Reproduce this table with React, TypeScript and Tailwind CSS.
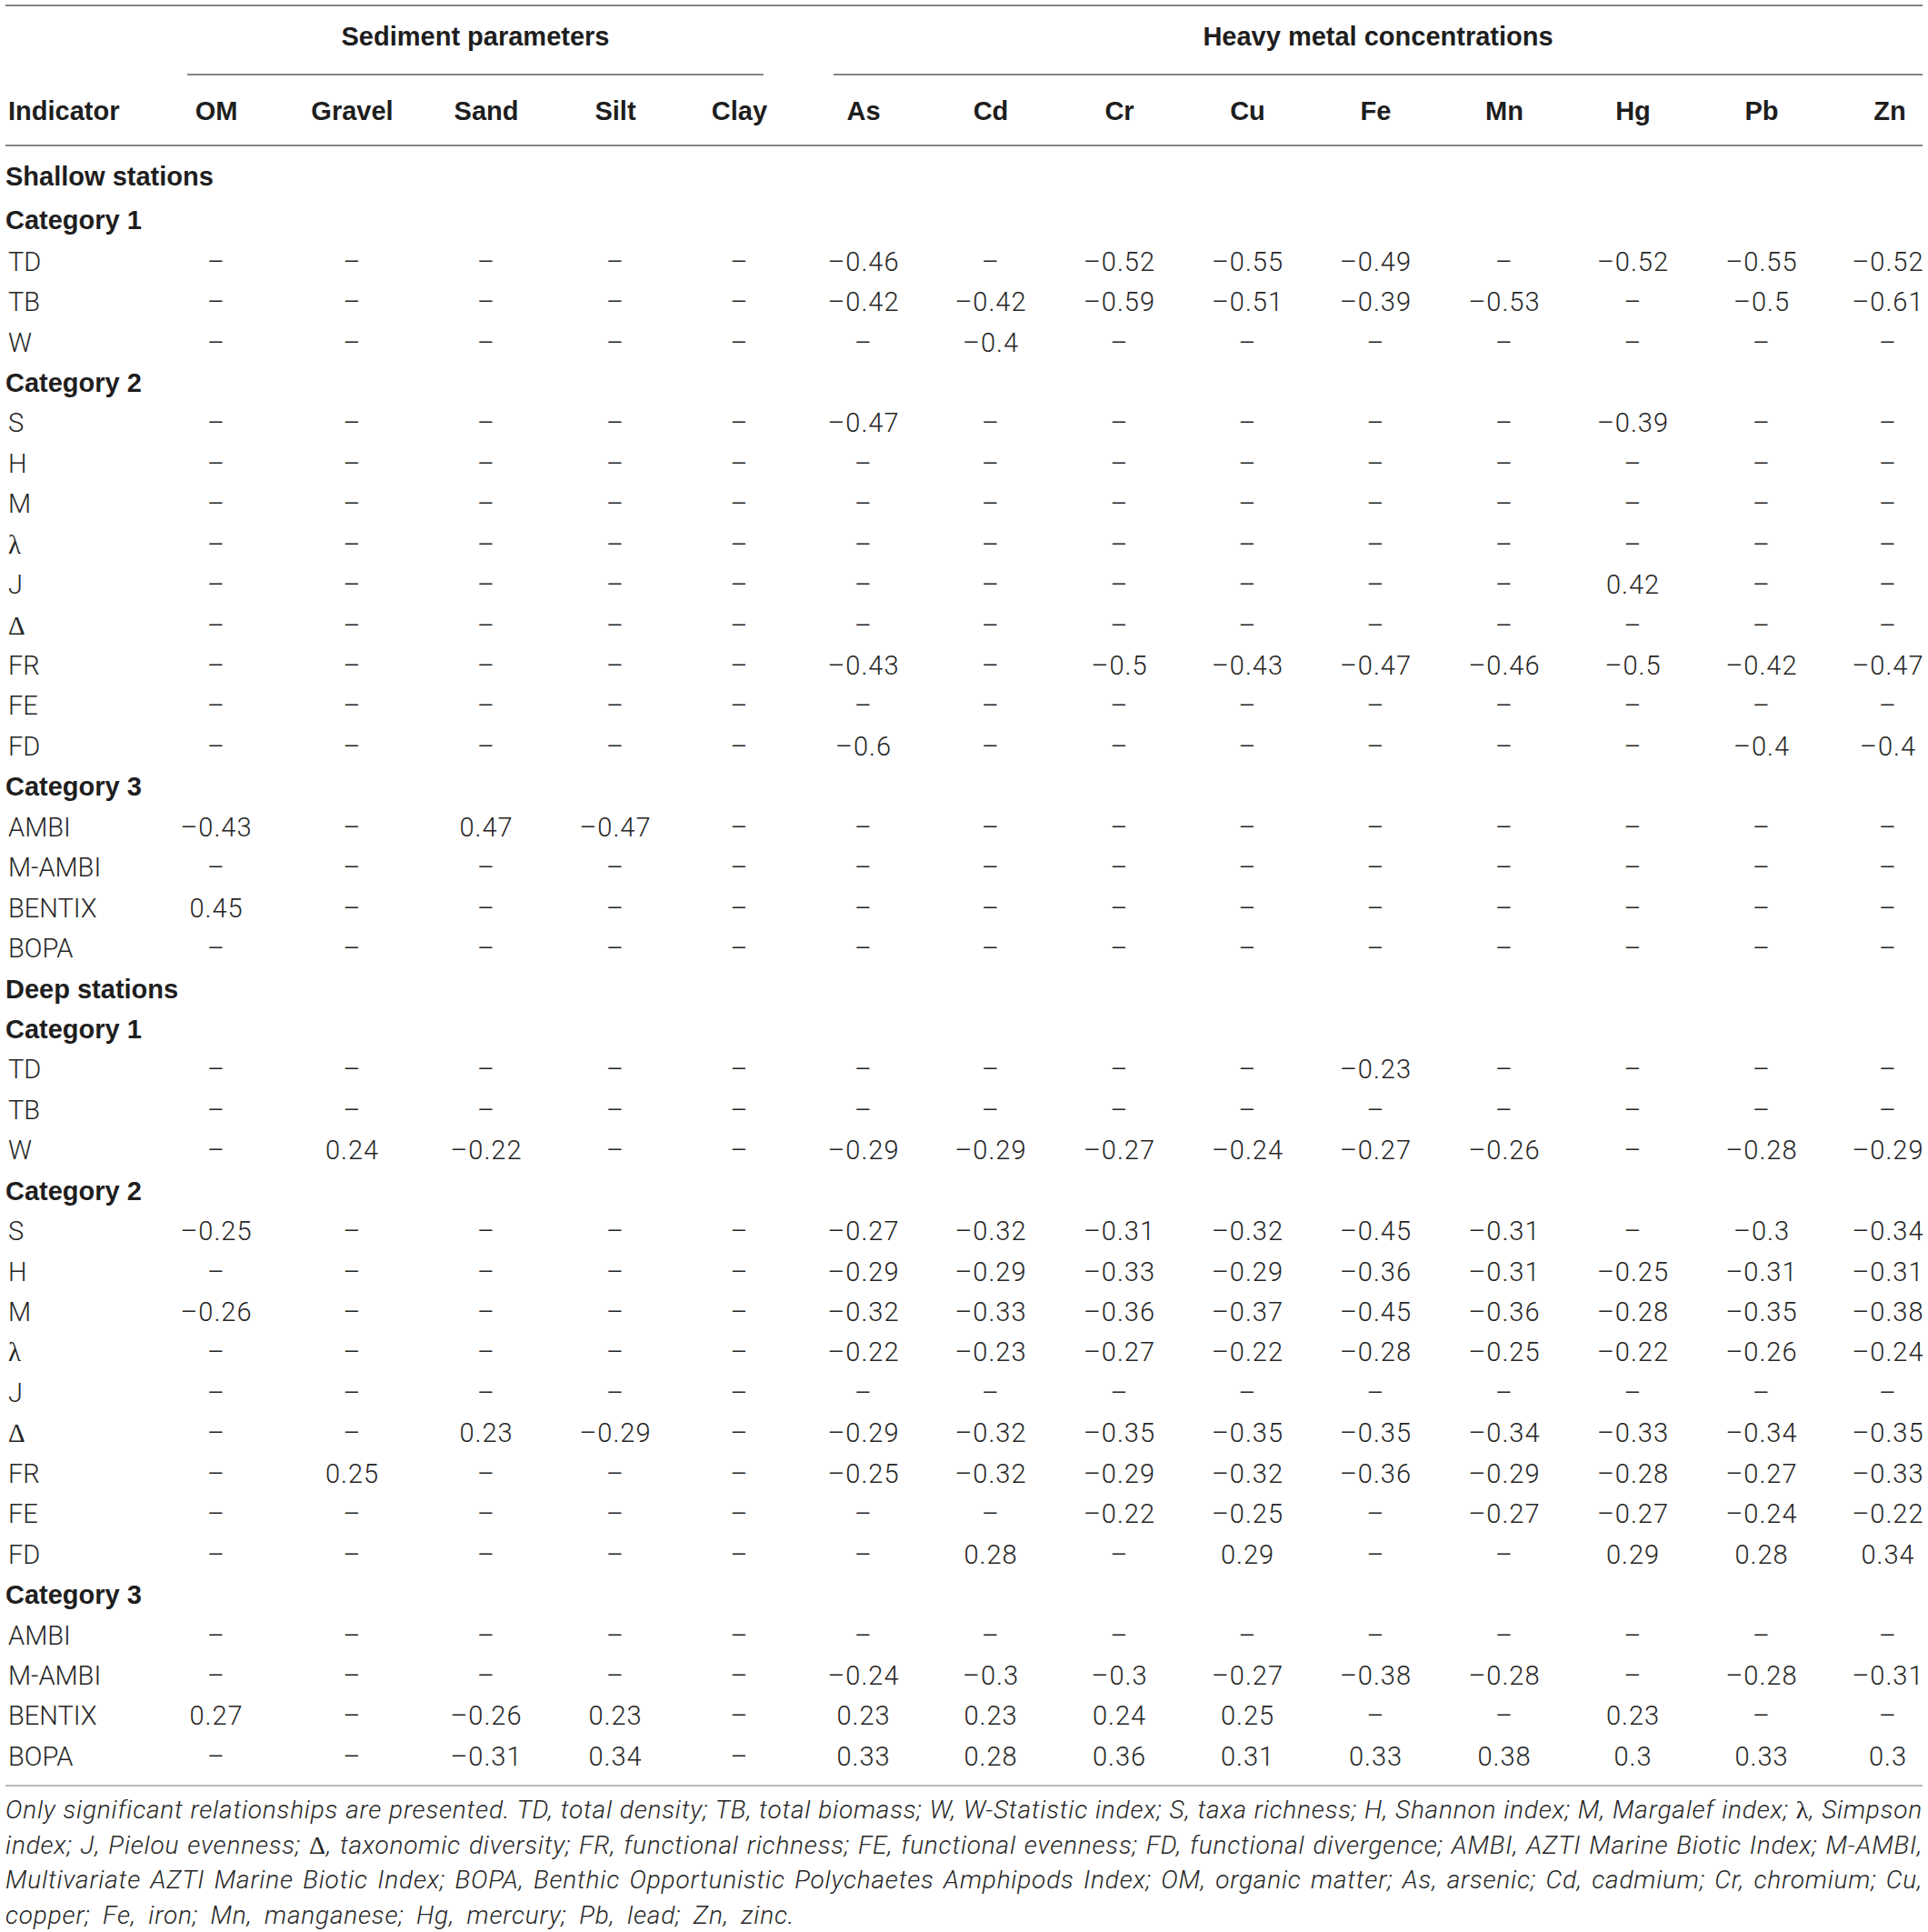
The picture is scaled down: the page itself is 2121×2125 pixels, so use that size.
const GRID =
  "grid grid-cols-[157px_150px_149px_146px_138px_135px_138px_142px_141px_141px_141px_142px_141px_142px_106px]"

type Row = { label: string; kind: "section" | "data"; values?: string[]; tall?: boolean }

const D = "- - - - - - - - - - - - - -"

function r(label: string, vals: string): Row {
  return { label, kind: "data", values: vals.split(" ") }
}
function s(label: string, tall = false): Row {
  return { label, kind: "section", tall }
}

const rows: Row[] = [
  s("Shallow stations", true),
  s("Category 1", true),
  r("TD", "- - - - - -0.46 - -0.52 -0.55 -0.49 - -0.52 -0.55 -0.52"),
  r("TB", "- - - - - -0.42 -0.42 -0.59 -0.51 -0.39 -0.53 - -0.5 -0.61"),
  r("W", "- - - - - - -0.4 - - - - - - -"),
  s("Category 2"),
  r("S", "- - - - - -0.47 - - - - - -0.39 - -"),
  r("H", D),
  r("M", D),
  r("λ", D),
  r("J", "- - - - - - - - - - - 0.42 - -"),
  r("Δ", D),
  r("FR", "- - - - - -0.43 - -0.5 -0.43 -0.47 -0.46 -0.5 -0.42 -0.47"),
  r("FE", D),
  r("FD", "- - - - - -0.6 - - - - - - -0.4 -0.4"),
  s("Category 3"),
  r("AMBI", "-0.43 - 0.47 -0.47 - - - - - - - - - -"),
  r("M-AMBI", D),
  r("BENTIX", "0.45 - - - - - - - - - - - - -"),
  r("BOPA", D),
  s("Deep stations"),
  s("Category 1"),
  r("TD", "- - - - - - - - - -0.23 - - - -"),
  r("TB", D),
  r("W", "- 0.24 -0.22 - - -0.29 -0.29 -0.27 -0.24 -0.27 -0.26 - -0.28 -0.29"),
  s("Category 2"),
  r("S", "-0.25 - - - - -0.27 -0.32 -0.31 -0.32 -0.45 -0.31 - -0.3 -0.34"),
  r("H", "- - - - - -0.29 -0.29 -0.33 -0.29 -0.36 -0.31 -0.25 -0.31 -0.31"),
  r("M", "-0.26 - - - - -0.32 -0.33 -0.36 -0.37 -0.45 -0.36 -0.28 -0.35 -0.38"),
  r("λ", "- - - - - -0.22 -0.23 -0.27 -0.22 -0.28 -0.25 -0.22 -0.26 -0.24"),
  r("J", D),
  r("Δ", "- - 0.23 -0.29 - -0.29 -0.32 -0.35 -0.35 -0.35 -0.34 -0.33 -0.34 -0.35"),
  r("FR", "- 0.25 - - - -0.25 -0.32 -0.29 -0.32 -0.36 -0.29 -0.28 -0.27 -0.33"),
  r("FE", "- - - - - - - -0.22 -0.25 - -0.27 -0.27 -0.24 -0.22"),
  r("FD", "- - - - - - 0.28 - 0.29 - - 0.29 0.28 0.34"),
  s("Category 3"),
  r("AMBI", D),
  r("M-AMBI", "- - - - - -0.24 -0.3 -0.3 -0.27 -0.38 -0.28 - -0.28 -0.31"),
  r("BENTIX", "0.27 - -0.26 0.23 - 0.23 0.23 0.24 0.25 - - 0.23 - -"),
  r("BOPA", "- - -0.31 0.34 - 0.33 0.28 0.36 0.31 0.33 0.38 0.3 0.33 0.3"),
]

const headers = ["Indicator", "OM", "Gravel", "Sand", "Silt", "Clay", "As", "Cd", "Cr", "Cu", "Fe", "Mn", "Hg", "Pb", "Zn"]

function fmt(v: string) {
  return v.replace("-", "\u2013")
}

function Label({ text }: { text: string }) {
  if (text === "λ" || text === "Δ") {
    return <span className="font-['Liberation_Serif',serif]">{text}</span>
  }
  return <>{text}</>
}

function Greek({ c }: { c: string }) {
  return <span className="not-italic font-['Liberation_Serif',serif]">{c}</span>
}

export default function App() {
  return (
    <div className="w-[2121px] overflow-hidden bg-white px-[6px] pt-[5px] text-[#1e1e1e] font-['Roboto',sans-serif]">
      <div className="border-t-2 border-[#858585]">
        {/* spanner headers */}
        <div className={GRID}>
          <div />
          <div className="col-span-5 pl-[43px] pr-[41px]">
            <div className="flex h-[74px] items-center justify-center pb-[6px] font-['Liberation_Sans',sans-serif] text-[29px] font-bold">
              Sediment parameters
            </div>
            <div className="h-[2px] bg-[#858585]" />
          </div>
          <div className="col-span-9 pl-[36px]">
            <div className="flex h-[74px] items-center justify-center pb-[6px] font-['Liberation_Sans',sans-serif] text-[29px] font-bold">
              Heavy metal concentrations
            </div>
            <div className="h-[2px] bg-[#858585]" />
          </div>
        </div>

        {/* column headers */}
        <div className={`${GRID} h-[78px] items-center border-b-2 border-[#858585] pt-[4px] font-['Liberation_Sans',sans-serif] text-[29px] font-bold`}>
          {headers.map((h, i) => (
            <div
              key={h}
              className={
                i === 0
                  ? "pl-[3px] text-left"
                  : i === 14
                    ? "flex justify-center pl-[34px] whitespace-nowrap"
                    : "flex justify-center whitespace-nowrap"
              }
            >
              {h}
            </div>
          ))}
        </div>

        {/* body */}
        <div className="border-b-2 border-[#b9b9b9] pt-[10px] pb-[8px]">
          {rows.map((row, idx) =>
            row.kind === "section" ? (
              <div
                key={idx}
                className={`flex items-center whitespace-nowrap font-['Liberation_Sans',sans-serif] text-[29px] font-bold ${row.tall ? "h-[47.6px]" : "h-[44.45px]"}`}
              >
                {row.label}
              </div>
            ) : (
              <div
                key={idx}
                className={`${GRID} h-[44.45px] items-center whitespace-nowrap text-[29px] font-light text-[#262626]`}
              >
                <div className="pl-[3px] text-left">
                  <Label text={row.label} />
                </div>
                {row.values!.map((v, i) => (
                  <div
                    key={i}
                    className={
                      i === 13
                        ? "flex justify-center pl-[30px] tracking-[1px]"
                        : "flex justify-center tracking-[1px]"
                    }
                  >
                    {fmt(v)}
                  </div>
                ))}
              </div>
            )
          )}
        </div>
      </div>

      {/* footnote */}
      <div className="pt-[7px] text-[28px] font-light italic leading-[38.7px] tracking-[0.8px] text-[#262626]">
        <div className="text-justify [text-align-last:justify]">
          Only significant relationships are presented. TD, total density; TB, total biomass; W, W-Statistic index; S,
          taxa richness; H, Shannon index; M, Margalef index; <Greek c="λ" />, Simpson
        </div>
        <div className="text-justify [text-align-last:justify]">
          index; J, Pielou evenness; <Greek c="Δ" />, taxonomic diversity; FR, functional richness; FE, functional
          evenness; FD, functional divergence; AMBI, AZTI Marine Biotic Index; M-AMBI,
        </div>
        <div className="text-justify [text-align-last:justify]">
          Multivariate AZTI Marine Biotic Index; BOPA, Benthic Opportunistic Polychaetes Amphipods Index; OM, organic
          matter; As, arsenic; Cd, cadmium; Cr, chromium; Cu,
        </div>
        <div className="[word-spacing:6px]">copper; Fe, iron; Mn, manganese; Hg, mercury; Pb, lead; Zn, zinc.</div>
      </div>
    </div>
  )
}
